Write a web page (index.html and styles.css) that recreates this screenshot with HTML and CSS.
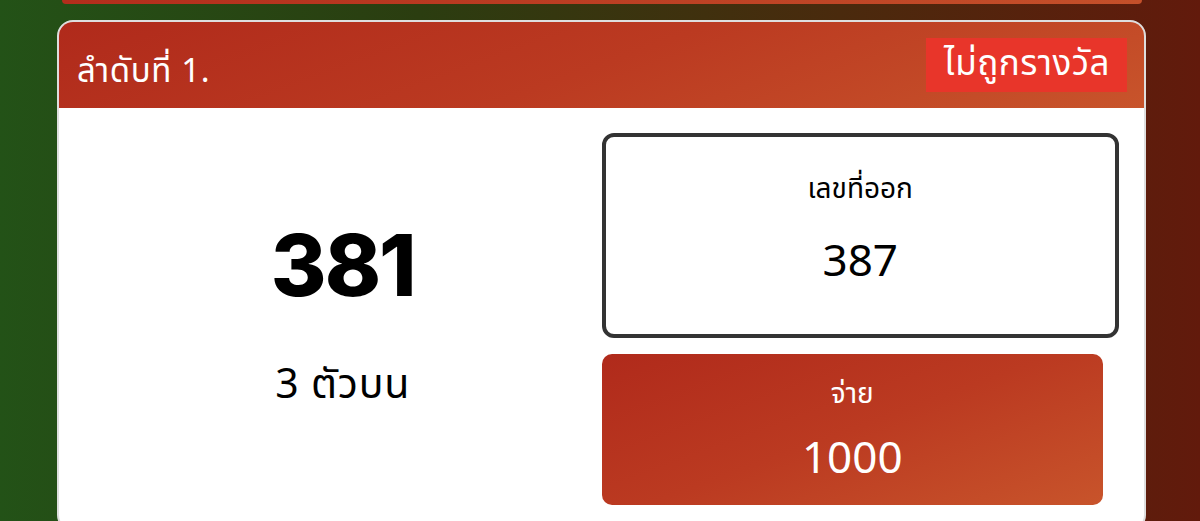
FILE: index.html
```html
<!DOCTYPE html>
<html lang="th">
<head>
<meta charset="utf-8">
<title>ผลรางวัล</title>
<link rel="stylesheet" href="styles.css">
</head>
<body>
<main class="page">
  <div class="prev-card"></div>
  <section class="ticket">
    <header class="ticket-head">
      <span class="ticket-rank">ลำดับที่ 1.</span>
      <span class="ticket-status">ไม่ถูกรางวัล</span>
    </header>
    <div class="ticket-body">
      <div class="bet">
        <div class="bet-number">381</div>
        <div class="bet-type">3 ตัวบน</div>
      </div>
      <div class="result">
        <div class="drawn">
          <div class="drawn-label">เลขที่ออก</div>
          <div class="drawn-number">387</div>
        </div>
        <div class="payout">
          <div class="payout-label">จ่าย</div>
          <div class="payout-amount">1000</div>
        </div>
      </div>
    </div>
  </section>
</main>
</body>
</html>
```

FILE: styles.css
```css
* { box-sizing: border-box; }

html, body {
  margin: 0;
  height: 100%;
}

body {
  font-family: "Noto Sans Thai", "Noto Sans", "DejaVu Sans", sans-serif;
  background: linear-gradient(90deg, #235217 0%, #2b3d10 35%, #4a2a0d 70%, #621a0c 100%);
  overflow: hidden;
}

.page {
  padding: 0 54px 0 57px;
}

.prev-card {
  height: 4px;
  margin: 0 4px 16px 5px;
  border-radius: 0 0 12px 12px;
  background: linear-gradient(90deg, #b32d1c, #c4502a);
}

.ticket {
  border: 2px solid #dedede;
  border-radius: 16px;
  background: #fff;
  overflow: hidden;
}

.ticket-head {
  height: 86px;
  display: flex;
  align-items: center;
  justify-content: space-between;
  padding: 0 17px 0 18px;
  background: linear-gradient(160deg, #b02a1b 0%, #bb3a21 50%, #c8542b 100%);
  color: #fff;
}

.ticket-rank {
  font-size: 33px;
  letter-spacing: 0.6px;
  margin-top: 14px;
}

.ticket-status {
  background: #e8352a;
  font-size: 35px;
  letter-spacing: 0.5px;
  padding: 0 17px 0 18px;
  height: 54px;
  line-height: 54px;
}

.ticket-body {
  display: grid;
  grid-template-columns: 1fr 1fr;
  padding: 25px 25px 24px 25px;
}

.bet {
  display: flex;
  flex-direction: column;
  align-items: center;
  justify-content: center;
  color: #000;
}

.bet-number {
  font-family: "Inter", "Noto Sans", sans-serif;
  font-weight: 800;
  font-size: 85px;
  line-height: 1;
  letter-spacing: -2px;
}

.bet-type {
  font-size: 41px;
  letter-spacing: 0.8px;
  margin-top: 46px;
}

.result {
  display: flex;
  flex-direction: column;
  gap: 16px;
}

.drawn {
  height: 205px;
  border: 4px solid #333;
  border-radius: 12px;
  display: flex;
  flex-direction: column;
  align-items: center;
  justify-content: center;
  color: #000;
}

.drawn-label {
  font-size: 28px;
  margin-top: -8px;
}

.drawn-number {
  font-size: 44px;
  margin-top: 18px;
}

.payout {
  height: 151px;
  margin-right: 16px;
  border-radius: 10px;
  background: linear-gradient(160deg, #b02a1b 0%, #bb3a21 50%, #c8542b 100%);
  color: #fff;
  display: flex;
  flex-direction: column;
  align-items: center;
  justify-content: center;
}

.payout-label {
  font-size: 28px;
  margin-top: 6px;
}

.payout-amount {
  font-size: 44px;
  margin-top: 10px;
}
```
